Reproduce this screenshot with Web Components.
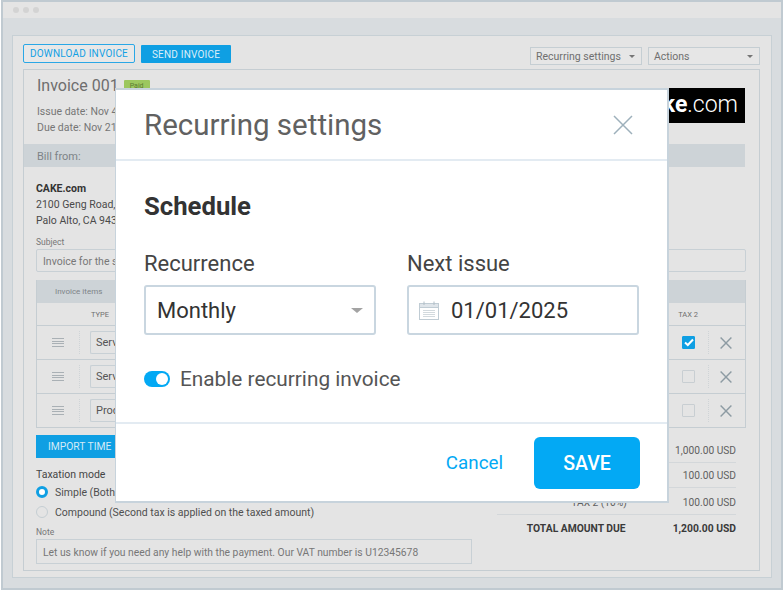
<!DOCTYPE html>
<html>
<head>
<meta charset="utf-8">
<title>Recurring settings</title>
<style>
  html, body { margin: 0; padding: 0; }
  body { width: 784px; height: 591px; overflow: hidden; background: #fff; font-family: Roboto, "Liberation Sans", sans-serif; }
</style>
</head>
<body>
<app-window>
  <invoice-toolbar></invoice-toolbar>
  <invoice-card></invoice-card>
  <recurring-modal slot="overlay"></recurring-modal>
</app-window>

<script>
const closeIcon = (size, color, sw) => `<svg width="${size}" height="${size}" viewBox="0 0 20 20" fill="none" stroke="${color}" stroke-width="${sw}"><path d="M1 1L19 19M19 1L1 19"/></svg>`;

class AppWindow extends HTMLElement {
  constructor() {
    super();
    this.attachShadow({ mode: "open" }).innerHTML = `
      <style>
        :host { display: block; position: relative; box-sizing: border-box; width: 782px; height: 590px; margin-left: 1px;
          border: 2px solid #c0cad1; background: #d8dcdf; }
        .bar { height: 16px; background: #e4e4e4; display: flex; align-items: center; gap: 4px; padding-left: 10px; }
        .bar i { width: 6px; height: 6px; border-radius: 50%; background: #d3d3d3; }
        .panel { box-sizing: border-box; margin: 17px 9px 0 9px; height: 543px; padding: 8px 11px 6px 10px;
          background: #e4e4e4; border: 1px solid #c7d0d5; }
      </style>
      <div class="bar"><i></i><i></i><i></i></div>
      <div class="panel"><slot></slot></div>
      <slot name="overlay"></slot>`;
  }
}

class InvoiceToolbar extends HTMLElement {
  constructor() {
    super();
    this.attachShadow({ mode: "open" }).innerHTML = `
      <style>
        :host { display: flex; align-items: flex-start; height: 25px; font-size: 10px; }
        button { font: inherit; box-sizing: border-box; border-radius: 1px; padding: 0; letter-spacing: .2px; }
        .outline { width: 112px; height: 19px; background: #e8e8e8; color: #13a0e4; border: 1px solid #2aa7e6; border-radius: 2px; }
        .solid { width: 90px; height: 18px; margin: 1px 0 0 6px; background: #0f9fe3; color: #dceef8; border: 0; }
        .sel { box-sizing: border-box; width: 112px; height: 18px; margin-top: 3px; padding: 1px 6px 0 5px; border: 1px solid #c5ced3;
          display: flex; align-items: center; justify-content: space-between; color: #6f6f6f; background: #e6e6e6; font-size: 10.5px; }
        .sel + .sel { margin-left: 6px; }
        .sel b { width: 0; height: 0; border: 3.5px solid transparent; border-top: 3.5px solid #757575; border-bottom: 0; }
        .gap { flex: 1; }
      </style>
      <button class="outline">DOWNLOAD INVOICE</button>
      <button class="solid">SEND INVOICE</button>
      <div class="gap"></div>
      <div class="sel"><span>Recurring settings</span><b></b></div>
      <div class="sel"><span>Actions</span><b></b></div>`;
  }
}

class ItemsTable extends HTMLElement {
  constructor() {
    super();
    const rows = [["Serv", true], ["Serv", false], ["Prod", false]];
    this.attachShadow({ mode: "open" }).innerHTML = `
      <style>
        :host { display: block; box-sizing: border-box; border: 1px solid #c5cdd2; border-top: 0; color: #555; }
        .head { height: 23px; background: #cdd3d7; font-size: 8px; color: #7d8387; display: flex; align-items: center; padding-left: 18px; }
        .cols { height: 22px; display: flex; align-items: center; font-size: 7.5px; color: #6f6f6f; border-bottom: 1px solid #c5cdd2; }
        .cols .type { margin-left: 54px; }
        .cols .tax { margin-left: auto; margin-right: 47px; }
        .row { height: 33px; display: flex; align-items: center; border-bottom: 1px solid #c5cdd2; }
        .row:last-child { border-bottom: 0; }
        .grip { width: 12px; height: 9px; margin-left: 15px; padding-right: 15px; box-sizing: content-box;
          background: repeating-linear-gradient(#a9b0b5 0 1px, transparent 1px 2.67px) 0 0 / 12px 9px no-repeat; }
        .dots { width: 0; height: 23px; border-left: 1px dotted #cfd4d7; }
        .type-sel { box-sizing: border-box; width: 40px; height: 23px; margin-left: 10px; padding-left: 5px; border: 1px solid #c8d0d5; border-right: 0;
          border-radius: 2px 0 0 2px; font-size: 11px; line-height: 21px; color: #555; }
        .check { box-sizing: border-box; width: 13px; height: 13px; margin-left: auto; margin-right: 13px; border: 1px solid #c8ced2; border-radius: 1px; }
        .check.on { background: #0f9fe3; border-color: #0f9fe3; display: flex; align-items: center; justify-content: center; }
        .del { margin: 0 13px 0 11px; display: flex; }
      </style>
      <div class="head">Invoice items</div>
      <div class="cols"><span class="type">TYPE</span><span class="tax">TAX 2</span></div>
      ${rows.map(([t, on]) => `
        <div class="row">
          <div class="grip"></div><div class="dots"></div>
          <div class="type-sel">${t}</div>
          <div class="check ${on ? "on" : ""}">${on ? `<svg width="10" height="9" viewBox="0 0 10 9" fill="none" stroke="#fff" stroke-width="2"><path d="M1 4.5L3.8 7L9 1.5"/></svg>` : ""}</div>
          <div class="dots"></div>
          <div class="del">${closeIcon(12, "#8d9ba3", 2.4)}</div>
        </div>`).join("")}`;
  }
}

class InvoiceCard extends HTMLElement {
  constructor() {
    super();
    this.attachShadow({ mode: "open" }).innerHTML = `
      <style>
        :host { display: block; box-sizing: border-box; height: 502px; border: 1px solid #c5cdd2; color: #555; font-size: 10.5px; }
        .top { height: 74px; padding: 6px 14px 0 13px; display: flex; justify-content: space-between; box-sizing: border-box; }
        h1 { margin: 0; font-size: 16px; font-weight: 400; color: #6e6e6e; line-height: 20px; display: flex; }
        .paid { display: inline-block; width: 26px; height: 12px; margin: 4px 0 0 5px; background: #9cc75f; color: #5d7d33; font-size: 7px; line-height: 12px; text-align: center; border-radius: 1px; }
        .meta { margin-top: 8px; line-height: 16px; color: #767676; }
        .logo { box-sizing: border-box; width: 92px; height: 35px; margin-top: 12px; background: #000; color: #fff; font-size: 23px; line-height: 34px; text-align: right; padding-right: 7px; font-weight: 300; }
        .logo b { font-weight: 700; }
        .bill { box-sizing: border-box; height: 23px; margin-right: 14px; background: #cdd3d7; color: #7d8387; padding: 1px 0 0 13px; line-height: 23px; font-size: 11px; }
        .body { padding: 14px 13px 0 12px; }
        .addr { line-height: 16px; color: #4a4a4a; }
        .addr b { color: #333; }
        label { display: block; font-size: 8.5px; color: #777; line-height: 10px; }
        .field { box-sizing: border-box; border: 1px solid #c8d0d5; color: #777; padding: 1px 0 0 6px; display: flex; align-items: center; }
        .subject { margin-top: 8px; }
        .subject .field { height: 23px; margin-top: 2px; border-radius: 2px; }
        items-table { margin-top: 8px; }
        .bottom { display: flex; justify-content: space-between; margin-top: 7px; }
        .left { width: 436px; }
        .import { width: 110px; height: 23px; background: #0f9fe3; color: #d5ebf7; font-size: 10.3px; line-height: 23px; padding-left: 12px; box-sizing: border-box; }
        .tax-title { margin-top: 10px; line-height: 14px; color: #444; }
        .radio { display: flex; align-items: center; gap: 7px; height: 20px; color: #4f4f4f; }
        .radio i { box-sizing: border-box; width: 12px; height: 12px; border-radius: 50%; border: 1px solid #c5ced3; }
        .radio i.on { border: 3.5px solid #0f9fe3; background: #fff; }
        .note { margin-top: 5px; }
        .note .field { height: 25px; margin-top: 2px; font-size: 10.3px; }
        .totals { width: 239px; margin-right: 10px; padding-top: 3px; font-size: 10.2px; }
        .t { display: flex; justify-content: flex-end; align-items: center; border-bottom: 1px solid #d3d7da; color: #5f5f5f; }
        .t .label { margin-right: 56px; }
        .t.total { border: 0; font-weight: 700; color: #3a3a3a; height: 27px; font-size: 10.3px; }
        .t.total .label { margin-right: 47px; }
      </style>
      <div class="top">
        <div>
          <h1>Invoice 001<span class="paid">Paid</span></h1>
          <div class="meta">Issue date: Nov 4<br>Due date: Nov 21</div>
        </div>
        <div class="logo"><b>ke</b>.com</div>
      </div>
      <div class="bill">Bill from:</div>
      <div class="body">
        <div class="addr"><b>CAKE.com</b><br>2100 Geng Road,<br>Palo Alto, CA 943</div>
        <div class="subject"><label>Subject</label><div class="field">Invoice for the s</div></div>
        <items-table></items-table>
        <div class="bottom">
          <div class="left">
            <div class="import">IMPORT TIME</div>
            <div class="tax-title">Taxation mode</div>
            <div class="radio"><i class="on"></i>Simple (Both</div>
            <div class="radio"><i></i>Compound (Second tax is applied on the taxed amount)</div>
            <div class="note"><label>Note</label><div class="field">Let us know if you need any help with the payment. Our VAT number is U12345678</div></div>
          </div>
          <div class="totals">
            <div class="t" style="height:24px"><span>1,000.00 USD</span></div>
            <div class="t" style="height:24px"><span>100.00 USD</span></div>
            <div class="t" style="height:27px;padding-top:2px;box-sizing:border-box"><span class="label">TAX 2 (10%)</span><span>100.00 USD</span></div>
            <div class="t total"><span class="label">TOTAL AMOUNT DUE</span><span>1,200.00 USD</span></div>
          </div>
        </div>
      </div>`;
  }
}

class RecurringModal extends HTMLElement {
  constructor() {
    super();
    this.attachShadow({ mode: "open" }).innerHTML = `
      <style>
        :host { display: block; position: absolute; left: 112px; top: 86px; box-sizing: border-box; width: 554px; height: 415px;
          background: #fff; border: 2px solid #c7d3dc; border-left-width: 1px; font-family: Roboto, "Liberation Sans", sans-serif; }
        header { box-sizing: border-box; height: 71px; border-bottom: 2px solid #e3ebf2; padding: 0 34px 0 28px; display: flex; align-items: center; justify-content: space-between; }
        h2 { margin: 0; font-size: 29.5px; font-weight: 400; color: #616161; }
        main { box-sizing: border-box; height: 263px; padding: 30px 28px 0 28px; border-bottom: 2px solid #e3ebf2; }
        h3 { margin: 0; font-size: 25.7px; line-height: 30px; font-weight: 700; color: #333; }
        .fields { display: flex; gap: 31px; margin-top: 30px; }
        .f { width: 232px; }
        .f label { display: block; font-size: 22px; line-height: 26px; color: #444; }
        .box { box-sizing: border-box; height: 50px; margin-top: 8px; border: 2px solid #c9d6e0; border-radius: 3px; padding: 0 11px; display: flex; align-items: center;
          font-size: 22px; color: #333; }
        .box.sel { justify-content: space-between; }
        .caret { width: 0; height: 0; border: 6.5px solid transparent; border-top: 5px solid #a3a3a3; border-bottom: 0; }
        .date { gap: 12px; padding-left: 10px; }
        .toggle-row { display: flex; align-items: center; gap: 10px; margin-top: 32px; font-size: 20.8px; color: #555; }
        .toggle { width: 26px; height: 16px; border-radius: 8px; background: #03a9f4; display: flex; align-items: center; justify-content: flex-end; padding-right: 2px; box-sizing: border-box; }
        .toggle i { width: 12px; height: 12px; border-radius: 50%; background: #fff; }
        footer { display: flex; justify-content: flex-end; align-items: center; padding: 13px 27px 0 0; gap: 31px; }
        .cancel { font-size: 18.8px; color: #03a9f4; }
        .save { width: 106px; height: 52px; border-radius: 6px; background: #03a9f4; color: #fff; font-size: 19.5px; font-weight: 500; display: flex; align-items: center; justify-content: center; }
      </style>
      <header><h2>Recurring settings</h2>${closeIcon(20, "#9db0bb", 1.5)}</header>
      <main>
        <h3>Schedule</h3>
        <div class="fields">
          <div class="f"><label>Recurrence</label><div class="box sel"><span>Monthly</span><span class="caret"></span></div></div>
          <div class="f"><label>Next issue</label><div class="box date">
            <svg width="20" height="19" viewBox="0 0 20 19" fill="none">
              <rect x=".5" y="2.5" width="19" height="16" fill="#fff" stroke="#c0ccd4"/>
              <rect x=".5" y="2.5" width="19" height="4" fill="#dfe5ea" stroke="#c0ccd4"/>
              <path d="M5 0.5V4M15 0.5V4" stroke="#b0bdc6"/>
              <path d="M4 9.5H16M4 11.5H16M4 13.5H16M4 15.5H16" stroke="#d3dade"/>
            </svg><span>01/01/2025</span></div></div>
        </div>
        <div class="toggle-row"><div class="toggle"><i></i></div><span>Enable recurring invoice</span></div>
      </main>
      <footer><span class="cancel">Cancel</span><div class="save">SAVE</div></footer>`;
  }
}

customElements.define("app-window", AppWindow);
customElements.define("invoice-toolbar", InvoiceToolbar);
customElements.define("items-table", ItemsTable);
customElements.define("invoice-card", InvoiceCard);
customElements.define("recurring-modal", RecurringModal);
</script>
</body>
</html>
